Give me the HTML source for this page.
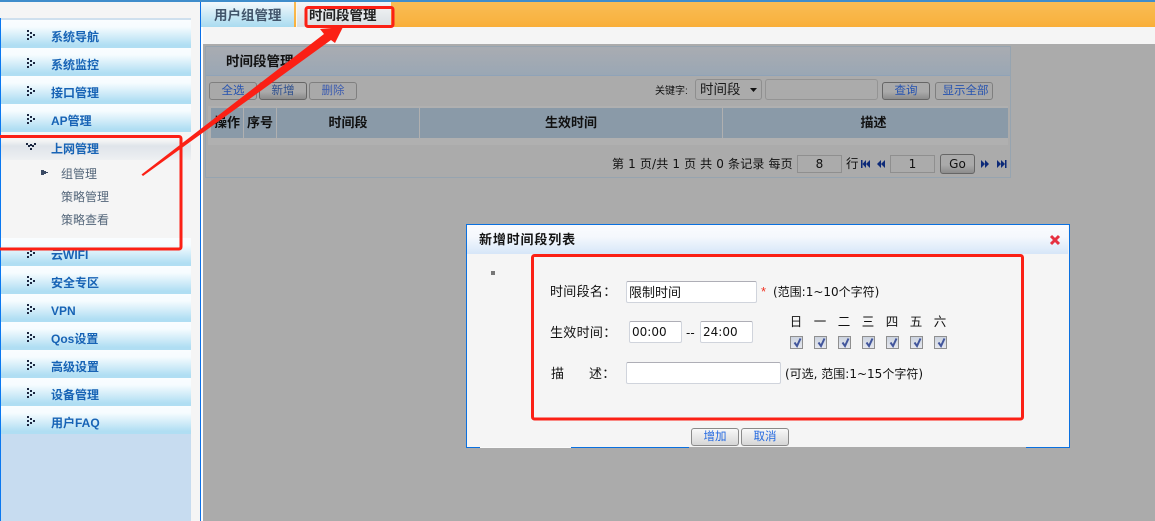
<!DOCTYPE html>
<html lang="zh"><head><meta charset="utf-8"><title>时间段管理</title>
<style>
html,body{margin:0;padding:0;width:1155px;height:521px;overflow:hidden;background:#f5f5f5}
*{box-sizing:border-box}
body{font-family:"Liberation Sans","Noto Sans CJK SC",sans-serif;font-size:13px;color:#111;position:relative}
.a{position:absolute}
.t{position:absolute;white-space:nowrap;line-height:16px}
.dv{font-family:"DejaVu Sans","Noto Sans CJK SC",sans-serif}
.mi{position:absolute;left:1px;width:190px;height:28px;background:linear-gradient(#fafdff 0,#f6fcff 25%,#b0def3 90%,#b0def3 100%)}
.mi b{position:absolute;left:50px;top:9px;font-size:12px;line-height:16px;color:#1763b5;white-space:nowrap}
.mi svg{position:absolute;left:25px;top:9px}
.sub{position:absolute;left:61px;font-size:12px;line-height:16px;color:#54667a;white-space:nowrap}
.btn{position:absolute;height:18px;border:1px solid #7f7f7f;border-radius:3px;background:#a9a9a9;color:#2653b0;font-size:11.5px;line-height:17px;text-align:center}
.btn.d{border-color:#666;background:linear-gradient(#aaa 0,#aaa 55%,#8c8c8c 100%);height:18px}
.th{position:absolute;top:108px;height:30px;background:#8a9aa8;font-weight:bold;font-size:13px;line-height:30px;text-align:center;color:#111}
.in{position:absolute;background:#fff;border:1px solid #d0d4dc;border-top-color:#aeaeb6;border-radius:2px;font-size:13px;line-height:21px;color:#111;padding-left:2px}
.dbtn{position:absolute;top:428px;height:18px;border:1px solid #8a8a8a;border-radius:3px;background:linear-gradient(#f8f8f8,#d6d6d6);color:#2469e0;font-size:11.5px;line-height:17px;text-align:center}
.ck{position:absolute;top:336px;width:13px;height:13px;border:1px solid #8f8f8f;background:linear-gradient(#ccd3df,#e6e8ee)}
.ck svg{position:absolute;left:1px;top:0}
.day{position:absolute;top:314px;font-size:12.5px;line-height:16px;width:14px;text-align:center}
</style></head><body>

<!-- top bars -->
<div class="a" style="left:0;top:0;width:1155px;height:2px;background:#3f8dcb"></div>
<div class="a" style="left:201px;top:2px;width:954px;height:25px;background:linear-gradient(#f9bc55,#f9b443 70%,#f9ae38)"></div>
<div class="a" style="left:201px;top:27px;width:954px;height:17px;background:#f5f5f5"></div>

<!-- tabs -->
<div class="a" style="left:201px;top:2px;width:93px;height:25px;background:linear-gradient(#f3f9fc,#a9dbf0)"></div>
<div class="t" style="left:214px;top:8px;font-size:13.500px;color:#42556b;font-weight:bold;-webkit-text-stroke:0">用户组管理</div>
<div class="a" style="left:297px;top:2px;width:94px;height:25px;background:linear-gradient(#f4f5f6,#d9dfe3)"></div>
<div class="t" style="left:309px;top:8px;font-size:13.500px;color:#222;font-weight:bold">时间段管理</div>
<div class="a" style="left:296px;top:2px;width:1px;height:25px;background:#fdf6e8"></div>

<!-- sidebar -->
<div class="a" style="left:0;top:18px;width:1px;height:503px;background:#0a78f0"></div>
<div class="a" style="left:1px;top:18px;width:190px;height:503px;background:#c7dcf0"></div>
<div class="a" style="left:1px;top:18px;width:190px;height:2px;background:#cfe0ee"></div>
<div class="a" style="left:200px;top:2px;width:1px;height:519px;background:#0a70e8"></div>
<div class="a" style="left:201px;top:27px;width:2px;height:494px;background:#fff"></div>

<svg width="0" height="0" style="position:absolute"><defs><g id="dots" fill="#1c2740"><rect x="1" y="1" width="2" height="2"/><rect x="1" y="5" width="2" height="2"/><rect x="1" y="9" width="2" height="2"/><rect x="4" y="3" width="2" height="2"/><rect x="4" y="7" width="2" height="2"/><rect x="7" y="5" width="2" height="2"/></g></defs></svg>

<div class="mi" style="top:20px"><svg width="10" height="12"><use href="#dots"/></svg><b>系统导航</b></div>
<div class="mi" style="top:48px"><svg width="10" height="12"><use href="#dots"/></svg><b>系统监控</b></div>
<div class="mi" style="top:76px"><svg width="10" height="12"><use href="#dots"/></svg><b>接口管理</b></div>
<div class="mi" style="top:104px"><svg width="10" height="12"><use href="#dots"/></svg><b>AP管理</b></div>
<div class="a" style="left:1px;top:132px;width:190px;height:106px;background:#f5f5f5"></div>
<div class="a" style="left:1px;top:132px;width:190px;height:28px;background:linear-gradient(#f5f5f5 0,#f5f5f5 30%,#dfe4ea 50%,#eef0f2 100%)"></div>
<div class="mi" style="top:132px;background:none"><svg width="12" height="12" style="left:24px"><g fill="#1c2740"><rect x="1" y="2" width="2" height="2"/><rect x="3" y="4" width="2" height="2"/><rect x="5" y="7" width="2" height="2"/><rect x="7" y="4" width="2" height="2"/><rect x="9" y="2" width="2" height="2"/><rect x="5" y="3" width="2" height="2"/></g></svg><b>上网管理</b></div>
<svg class="a" style="left:41px;top:169px" width="8" height="8"><path d="M0 1h3v1h2v1h2v1h-2v1h-2v1h-3z" fill="#3a4a64"/></svg>
<div class="sub" style="left:61px;top:166px">组管理</div>
<div class="sub" style="top:189px">策略管理</div>
<div class="sub" style="top:212px">策略查看</div>
<div class="mi" style="top:238px"><svg width="10" height="12"><use href="#dots"/></svg><b>云WIFI</b></div>
<div class="mi" style="top:266px"><svg width="10" height="12"><use href="#dots"/></svg><b>安全专区</b></div>
<div class="mi" style="top:294px"><svg width="10" height="12"><use href="#dots"/></svg><b>VPN</b></div>
<div class="mi" style="top:322px"><svg width="10" height="12"><use href="#dots"/></svg><b>Qos设置</b></div>
<div class="mi" style="top:350px"><svg width="10" height="12"><use href="#dots"/></svg><b>高级设置</b></div>
<div class="mi" style="top:378px"><svg width="10" height="12"><use href="#dots"/></svg><b>设备管理</b></div>
<div class="mi" style="top:406px"><svg width="10" height="12"><use href="#dots"/></svg><b>用户FAQ</b></div>

<!-- dimmed content -->
<div class="a" style="left:203px;top:44px;width:952px;height:477px;background:#ababab"></div>
<div class="a" style="left:205px;top:46px;width:806px;height:132px;border:1px solid #96a4b0;background:#ababab"></div>
<div class="a" style="left:206px;top:47px;width:804px;height:29px;background:linear-gradient(#a9acb2,#9aa7b4);border-bottom:1px solid #8fa3b8"></div>
<div class="t" style="left:226px;top:54px;font-size:13.500px;font-weight:bold;color:#111">时间段管理</div>

<div class="btn" style="left:209px;top:82px;width:48px">全选</div>
<div class="btn d" style="left:259px;top:82px;width:48px;color:#2d4f8e">新增</div>
<div class="btn" style="left:309px;top:82px;width:48px;color:#3c5cb0">删除</div>

<div class="t" style="left:655px;top:84px;font-size:10px;color:#111">关键字:</div>
<div class="a" style="left:695px;top:79px;width:67px;height:21px;border:1px solid #8e8e8e;border-radius:3px"></div>
<div class="t" style="left:700px;top:82px;font-size:13.500px;color:#1a1a1a">时间段</div>
<svg class="a" style="left:750px;top:88px" width="8" height="5"><path d="M0 0h7l-3.500 4z" fill="#111"/></svg>
<div class="a" style="left:765px;top:79px;width:113px;height:21px;border:1px solid #949494;border-radius:3px"></div>
<div class="btn d" style="left:882px;top:82px;width:48px">查询</div>
<div class="btn" style="left:935px;top:82px;width:58px;padding-left:3px">显示全部</div>

<div class="a" style="left:208px;top:106px;width:800px;height:39px;background:#b0b0b0"></div>
<div class="th" style="left:211px;width:32px">操作</div>
<div class="th" style="left:244px;width:32px">序号</div>
<div class="th" style="left:277px;width:142px">时间段</div>
<div class="th" style="left:420px;width:302px">生效时间</div>
<div class="th" style="left:723px;width:285px;padding-left:16px">描述</div>

<div class="t dv" style="left:612px;top:156px;font-size:12px;letter-spacing:.15px;color:#111">第 1 页/共 1 页 共 0 条记录 每页</div>
<div class="a dv" style="left:797px;top:155px;width:45px;height:18px;border:1px solid #8f8f8f;text-align:center;line-height:17px;font-size:12px">8</div>
<div class="t" style="left:846px;top:156px;font-size:12.500px">行</div>
<svg class="a" style="left:859px;top:159px" width="150" height="10" fill="#0d2a78">
<path d="M2 1h1.500v8H2zM7 1v8L3.500 5zM11 1v8L7 5zM22 1v8L18 5zM26 1v8L22 5zM122 1v8l4-4zM126 1v8l4-4zM138 1v8l4-4zM142 1v8l4-4zM146 1h1.500v8H146z"/></svg>
<div class="a dv" style="left:890px;top:155px;width:45px;height:18px;border:1px solid #8f8f8f;text-align:center;line-height:17px;font-size:12px">1</div>
<div class="btn d dv" style="left:940px;top:154px;width:35px;height:20px;color:#111;font-size:12px;line-height:19px">Go</div>

<!-- dialog -->
<div class="a" style="left:466px;top:224px;width:604px;height:224px;background:#f5f5f5;border:1px solid #0a70e0;border-bottom:none"></div>
<div class="a" style="left:467px;top:225px;width:601px;height:29px;background:linear-gradient(#fafbfe,#f5f8fd 40%,#d6e6f8)"></div>
<div class="t" style="left:479px;top:232px;font-size:13px;font-weight:bold;letter-spacing:.85px;color:#151515">新增时间段列表</div>
<svg class="a" style="left:1049px;top:234px" width="12" height="12"><path d="M2 2L10 10M10 2L2 10" stroke="#e63040" stroke-width="3"/></svg>
<div class="a" style="left:466px;top:447px;width:14px;height:1px;background:#0a70e0"></div>
<div class="a" style="left:480px;top:447px;width:91px;height:1px;background:#fafafa"></div>
<div class="a" style="left:571px;top:447px;width:118px;height:1px;background:#0a70e0"></div>
<div class="a" style="left:689px;top:447px;width:337px;height:1px;background:#ababab"></div>
<div class="a" style="left:1026px;top:447px;width:44px;height:1px;background:#0a70e0"></div>
<div class="a" style="left:491px;top:271px;width:4px;height:4px;background:#777"></div>

<div class="t" style="left:550px;top:284px;font-size:13px;letter-spacing:.3px">时间段名：</div>
<div class="in" style="left:626px;top:281px;width:131px;height:22px">限制时间</div>
<div class="t" style="left:761px;top:284px;font-size:13px;color:#f03020">*</div>
<div class="t dv" style="left:773px;top:284px;font-size:12px">(范围:1~10个字符)</div>

<div class="t" style="left:550px;top:325px;font-size:13px;letter-spacing:.3px">生效时间：</div>
<div class="in dv" style="left:629px;top:321px;width:53px;height:22px;font-size:12px">00:00</div>
<div class="t dv" style="left:686px;top:325px;font-size:12px">--</div>
<div class="in dv" style="left:700px;top:321px;width:53px;height:22px;font-size:12px">24:00</div>

<div class="day" style="left:789px">日</div>
<div class="day" style="left:813px">一</div>
<div class="day" style="left:837px">二</div>
<div class="day" style="left:861px">三</div>
<div class="day" style="left:885px">四</div>
<div class="day" style="left:909px">五</div>
<div class="day" style="left:933px">六</div>

<div class="ck" style="left:790px"><svg width="11" height="11"><path d="M2.500 5.500L5 9 8.500 1.500" fill="none" stroke="#42569c" stroke-width="2"/></svg></div>
<div class="ck" style="left:814px"><svg width="11" height="11"><path d="M2.500 5.500L5 9 8.500 1.500" fill="none" stroke="#42569c" stroke-width="2"/></svg></div>
<div class="ck" style="left:838px"><svg width="11" height="11"><path d="M2.500 5.500L5 9 8.500 1.500" fill="none" stroke="#42569c" stroke-width="2"/></svg></div>
<div class="ck" style="left:862px"><svg width="11" height="11"><path d="M2.500 5.500L5 9 8.500 1.500" fill="none" stroke="#42569c" stroke-width="2"/></svg></div>
<div class="ck" style="left:886px"><svg width="11" height="11"><path d="M2.500 5.500L5 9 8.500 1.500" fill="none" stroke="#42569c" stroke-width="2"/></svg></div>
<div class="ck" style="left:910px"><svg width="11" height="11"><path d="M2.500 5.500L5 9 8.500 1.500" fill="none" stroke="#42569c" stroke-width="2"/></svg></div>
<div class="ck" style="left:934px"><svg width="11" height="11"><path d="M2.500 5.500L5 9 8.500 1.500" fill="none" stroke="#42569c" stroke-width="2"/></svg></div>

<div class="t" style="left:551px;top:366px;font-size:13px">描</div>
<div class="t" style="left:589px;top:366px;font-size:13px;letter-spacing:.3px">述：</div>
<div class="in" style="left:626px;top:362px;width:155px;height:22px"></div>
<div class="t dv" style="left:785px;top:366px;font-size:12px">(可选, 范围:1~15个字符)</div>

<div class="dbtn" style="left:691px;width:48px">增加</div>
<div class="dbtn" style="left:741px;width:48px">取消</div>

<!-- red annotations -->
<svg class="a" style="left:0;top:0" width="1155" height="521">
<g fill="none" stroke="#fb2015" stroke-width="3">
<path d="M-2 136.500H179a2 2 0 0 1 2 2V247a2 2 0 0 1-2 2H-2"/>
<rect x="306" y="7.500" width="87" height="19" rx="2"/>
<rect x="532.500" y="255.500" width="490" height="163.500" rx="2"/>
</g>
<path d="M141.500 174.500L324 34 320 29 343 27 335 43 331 40 143 176z" fill="#fb2015"/>
</svg>
</body></html>
